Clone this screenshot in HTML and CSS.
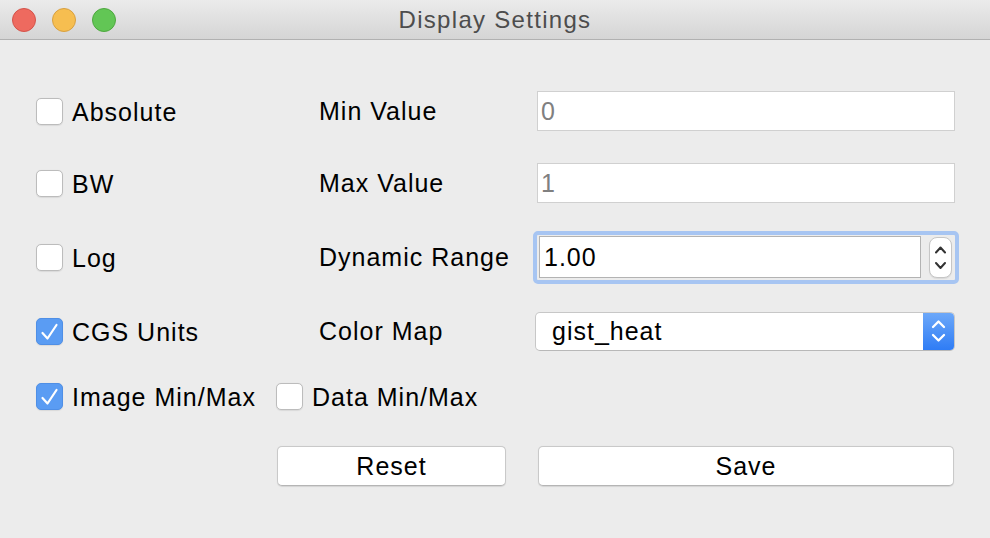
FILE: index.html
```html
<!DOCTYPE html>
<html>
<head>
<meta charset="utf-8">
<title>Display Settings</title>
<link rel="stylesheet" href="styles.css">
</head>
<body>
<div class="window">
  <div class="titlebar">
    <div class="lights">
      <span class="light red"></span>
      <span class="light yellow"></span>
      <span class="light green"></span>
    </div>
    <div class="title">Display Settings</div>
    <div></div>
  </div>
  <div class="form">
    <label class="check c1"><span class="box"></span><span class="txt">Absolute</span></label>
    <div class="label">Min Value</div>
    <div class="field disabled">0</div>

    <label class="check c1"><span class="box"></span><span class="txt">BW</span></label>
    <div class="label">Max Value</div>
    <div class="field disabled">1</div>

    <label class="check c1"><span class="box"></span><span class="txt">Log</span></label>
    <div class="label">Dynamic Range</div>
    <div class="spin">
      <div class="spin-field">1.00</div>
      <div class="stepper">
        <svg width="23" height="41" viewBox="0 0 23 41"><path d="M7 15.5 L11.5 10.5 L16 15.5 M7 26 L11.5 31 L16 26" fill="none" stroke="#333" stroke-width="2" stroke-linecap="round" stroke-linejoin="round"/></svg>
      </div>
    </div>

    <label class="check c1"><span class="box on"><svg width="27" height="27" viewBox="0 0 27 27"><path d="M6.5 15 L11.5 20.5 L20.5 7" fill="none" stroke="#fff" stroke-width="2.2" stroke-linecap="round" stroke-linejoin="round"/></svg></span><span class="txt">CGS Units</span></label>
    <div class="label">Color Map</div>
    <div class="combo">
      <span class="combo-txt">gist_heat</span>
      <span class="combo-btn"><svg width="32" height="39" viewBox="0 0 32 39"><path d="M10 15 L15.5 9.5 L21 15 M10 23 L15.5 28.5 L21 23" fill="none" stroke="#fff" stroke-width="2.3" stroke-linecap="round" stroke-linejoin="round"/></svg></span>
    </div>

    <label class="check c1"><span class="box on"><svg width="27" height="27" viewBox="0 0 27 27"><path d="M6.5 15 L11.5 20.5 L20.5 7" fill="none" stroke="#fff" stroke-width="2.2" stroke-linecap="round" stroke-linejoin="round"/></svg></span><span class="txt">Image Min/Max</span></label>
    <label class="check c2"><span class="box"></span><span class="txt">Data Min/Max</span></label>
    <div></div>

    <div></div>
    <button class="btn reset">Reset</button>
    <button class="btn save">Save</button>
  </div>
</div>
</body>
</html>
```
FILE: styles.css
```css
html, body {
  margin: 0;
  padding: 0;
}
body {
  background: #ececec;
  font-family: "Liberation Sans", Arial, sans-serif;
  color: #000;
}
.window {
  width: 990px;
  height: 538px;
  background: #ececec;
  overflow: hidden;
}
.titlebar {
  height: 39px;
  display: grid;
  grid-template-columns: 1fr auto 1fr;
  align-items: center;
  background: linear-gradient(#ebebeb, #d5d5d5);
  border-bottom: 1px solid #b1b1b1;
}
.lights {
  display: flex;
  gap: 16px;
  padding-left: 12px;
}
.light {
  width: 24px;
  height: 24px;
  border-radius: 50%;
  box-sizing: border-box;
}
.red { background: #ee6a5f; border: 1px solid #d4534a; }
.yellow { background: #f6be50; border: 1px solid #d8a040; }
.green { background: #62c655; border: 1px solid #4ea83f; }
.title {
  font-size: 24px;
  letter-spacing: 1.3px;
  color: #4d4d4d;
  padding-top: 1px;
}
.form {
  display: grid;
  grid-template-columns: 241px 260px 418px;
  grid-template-rows: 70px 74px 74px 74px 56px 84px;
  align-items: center;
  padding: 36px 0 0 36px;
  font-size: 25px;
  letter-spacing: 1px;
}
.check {
  display: flex;
  align-items: center;
  gap: 9px;
}
.c2 {
  margin-left: -1px;
}
.box {
  width: 27px;
  height: 27px;
  box-sizing: border-box;
  border: 1px solid #bcbcbc;
  border-radius: 5px;
  background: #fff;
  box-shadow: 0 0.5px 1px rgba(0,0,0,0.08);
  flex: none;
  display: block;
}
.box svg { display: block; margin: -1px; }
.box.on {
  background: #5a9cf3;
  border-color: #4f8fe6;
}
.txt {
  line-height: 28px;
  padding-top: 1px;
}
.label {
  padding-left: 42px;
  padding-top: 1px;
}
.field {
  height: 40px;
  box-sizing: border-box;
  border: 1px solid #d0d0d0;
  background: #fff;
  line-height: 38px;
  padding-left: 3px;
}
.field.disabled {
  color: #808080;
}
.spin {
  margin: 0 -4px;
  height: 53px;
  box-sizing: border-box;
  border: 4px solid #a7c5f2;
  border-radius: 5px;
  display: flex;
  align-items: center;
  gap: 8px;
  padding: 0 3px 0 2px;
}
.spin-field {
  flex: 1;
  height: 42px;
  box-sizing: border-box;
  border: 1px solid #b3b3b3;
  background: #fff;
  line-height: 40px;
  padding-left: 4px;
}
.stepper {
  width: 23px;
  height: 41px;
  box-sizing: border-box;
  border: 1px solid #c6c6c6;
  border-radius: 8px;
  background: #fff;
  box-shadow: 0 1px 1px rgba(0,0,0,0.08);
  overflow: hidden;
}
.stepper svg { display: block; margin: -1px; }
.combo {
  margin-left: -2px;
  height: 39px;
  box-sizing: border-box;
  border: 1px solid #c7c7c7;
  border-bottom-color: #b8b8b8;
  border-radius: 5px;
  background: #fff;
  display: flex;
  align-items: center;
  overflow: hidden;
}
.combo-txt {
  flex: 1;
  padding-left: 16px;
}
.combo-btn {
  width: 32px;
  height: 39px;
  flex: none;
  background: linear-gradient(#6ea9f9, #2d7bf5);
  margin: -1px -1px -1px 0;
}
.combo-btn svg { display: block; }
.btn {
  height: 40px;
  box-sizing: border-box;
  border: 1px solid #c9c9c9;
  border-bottom-color: #b5b5b5;
  border-radius: 5px;
  background: #fff;
  font-family: inherit;
  font-size: 25px;
  letter-spacing: 1px;
  color: #000;
  padding: 0;
  box-shadow: 0 0.5px 1px rgba(0,0,0,0.1);
}
.reset {
  width: 229px;
}
.save {
  margin-left: 1px;
  width: 416px;
}
```
